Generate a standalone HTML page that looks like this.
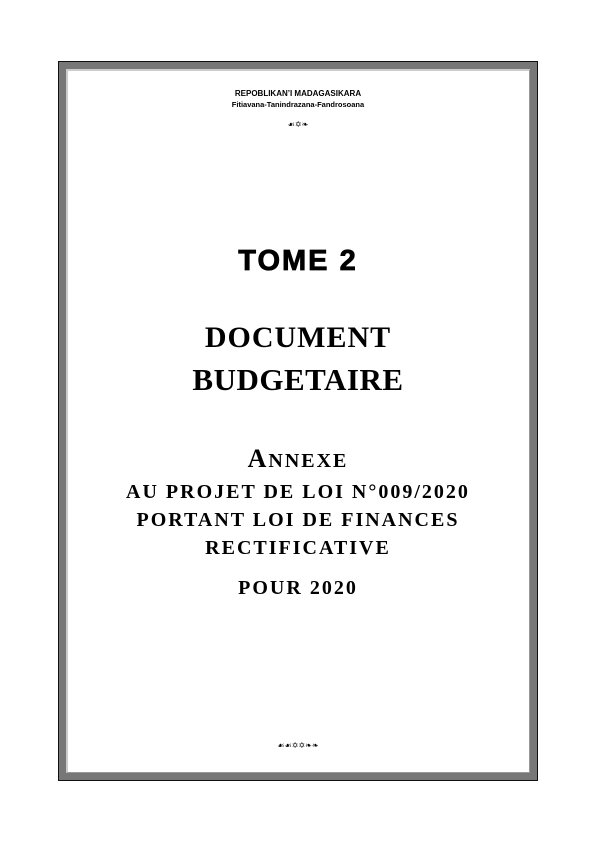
<!DOCTYPE html>
<html><head><meta charset="utf-8"><style>
body{margin:0;width:596px;height:842px;background:#fff;position:relative;overflow:hidden}
.frame{position:absolute;left:58px;top:61px;width:478px;height:718px;border:1px solid #111;background:#777}
.inner{position:absolute;left:7px;top:7px;right:7px;bottom:7px;background:#fff;border-left:2px solid #ccc;border-top:2px solid #ccc;border-right:1px solid #999;border-bottom:1px solid #999}
.c{position:absolute;left:0;width:596px;text-align:center;white-space:nowrap;color:#000}
.s{font-family:"Liberation Sans",sans-serif;font-weight:bold}
.r{font-family:"Liberation Serif",serif;font-weight:bold}
</style></head><body>
<div class="frame"><div class="inner"></div></div>
<div class="c s" style="top:89px;font-size:8px">REPOBLIKAN’I MADAGASIKARA</div>
<div class="c s" style="top:100px;font-size:7.5px">Fitiavana-Tanindrazana-Fandrosoana</div>
<div class="c" style="top:120px;font-size:8px;font-family:'DejaVu Sans',sans-serif">☙✡❧</div>
<div class="c s" style="top:245px;font-size:29px;letter-spacing:2px;-webkit-text-stroke:0.8px #000">TOME 2</div>
<div class="c r" style="top:321px;font-size:30px;letter-spacing:1px">DOCUMENT</div>
<div class="c r" style="top:362px;font-size:31px;letter-spacing:0.5px">BUDGETAIRE</div>
<div class="c r" style="top:444px;font-size:26px;letter-spacing:2px">A<span style="font-size:20px">NNEXE</span></div>
<div class="c r" style="top:481px;font-size:20px;letter-spacing:2px">AU PROJET DE LOI N°009/2020</div>
<div class="c r" style="top:509px;font-size:20px;letter-spacing:2px">PORTANT LOI DE FINANCES</div>
<div class="c r" style="top:537px;font-size:20px;letter-spacing:2px">RECTIFICATIVE</div>
<div class="c r" style="top:577px;font-size:20px;letter-spacing:2px">POUR 2020</div>
<div class="c" style="top:741px;font-size:8px;font-family:'DejaVu Sans',sans-serif">☙☙✡✡❧❧</div>
</body></html>
